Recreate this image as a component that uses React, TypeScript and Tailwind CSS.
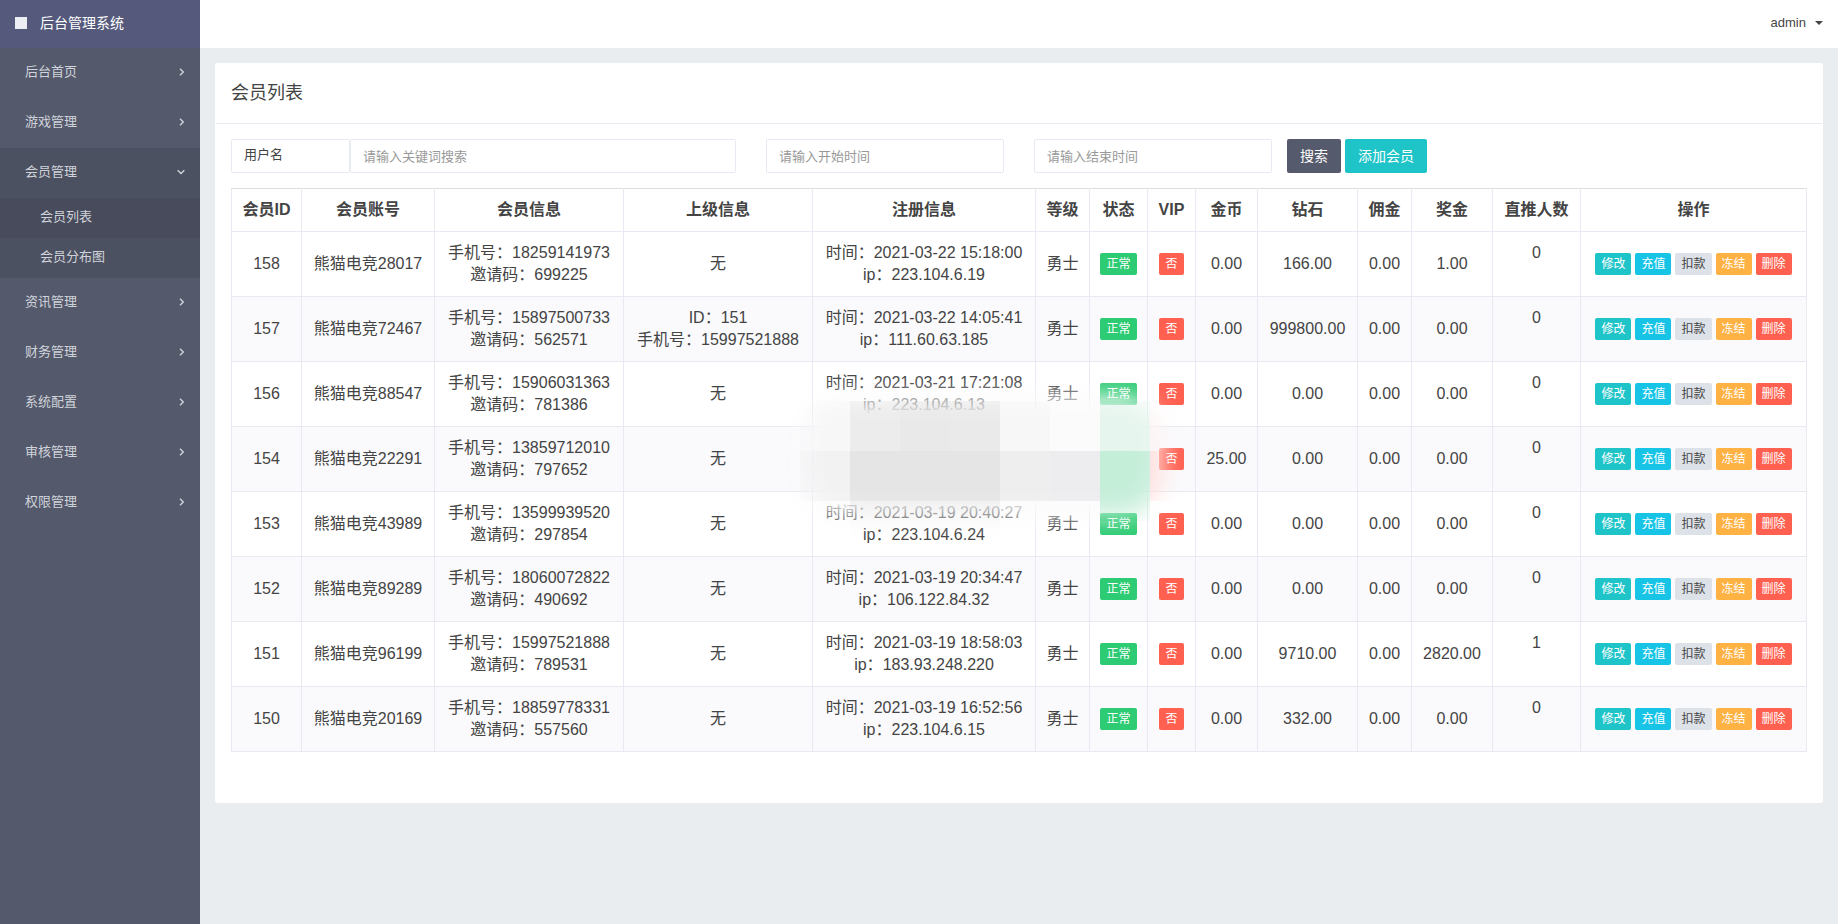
import React from "react";

const menuTop = ["后台首页", "游戏管理"];
const menuBottom = ["资讯管理", "财务管理", "系统配置", "审核管理", "权限管理"];

const columns = [
  { title: "会员ID", width: "w-[70px]" },
  { title: "会员账号", width: "w-[133px]" },
  { title: "会员信息", width: "w-[189px]" },
  { title: "上级信息", width: "w-[189px]" },
  { title: "注册信息", width: "w-[223px]" },
  { title: "等级", width: "w-[54px]" },
  { title: "状态", width: "w-[58px]" },
  { title: "VIP", width: "w-[48px]" },
  { title: "金币", width: "w-[62px]" },
  { title: "钻石", width: "w-[100px]" },
  { title: "佣金", width: "w-[54px]" },
  { title: "奖金", width: "w-[81px]" },
  { title: "直推人数", width: "w-[88px]" },
  { title: "操作", width: "w-[226px]" },
];

const members = [
  { id: 158, name: "熊猫电竞28017", phone: "18259141973", code: "699225", time: "2021-03-22 15:18:00", ip: "223.104.6.19", gold: "0.00", diamond: "166.00", bonus: "1.00", invited: 0 },
  { id: 157, name: "熊猫电竞72467", phone: "15897500733", code: "562571", parent: { id: 151, phone: "15997521888" }, time: "2021-03-22 14:05:41", ip: "111.60.63.185", gold: "0.00", diamond: "999800.00", bonus: "0.00", invited: 0 },
  { id: 156, name: "熊猫电竞88547", phone: "15906031363", code: "781386", time: "2021-03-21 17:21:08", ip: "223.104.6.13", gold: "0.00", diamond: "0.00", bonus: "0.00", invited: 0 },
  { id: 154, name: "熊猫电竞22291", phone: "13859712010", code: "797652", masked: true, gold: "25.00", diamond: "0.00", bonus: "0.00", invited: 0 },
  { id: 153, name: "熊猫电竞43989", phone: "13599939520", code: "297854", time: "2021-03-19 20:40:27", ip: "223.104.6.24", gold: "0.00", diamond: "0.00", bonus: "0.00", invited: 0 },
  { id: 152, name: "熊猫电竞89289", phone: "18060072822", code: "490692", time: "2021-03-19 20:34:47", ip: "106.122.84.32", gold: "0.00", diamond: "0.00", bonus: "0.00", invited: 0 },
  { id: 151, name: "熊猫电竞96199", phone: "15997521888", code: "789531", time: "2021-03-19 18:58:03", ip: "183.93.248.220", gold: "0.00", diamond: "9710.00", bonus: "2820.00", invited: 1 },
  { id: 150, name: "熊猫电竞20169", phone: "18859778331", code: "557560", time: "2021-03-19 16:52:56", ip: "223.104.6.15", gold: "0.00", diamond: "332.00", bonus: "0.00", invited: 0 },
];

const actions = [
  { label: "修改", color: "bg-[#1fc4c8] text-white" },
  { label: "充值", color: "bg-[#18c4e6] text-white" },
  { label: "扣款", color: "bg-[#dde1e8] text-[#444444]" },
  { label: "冻结", color: "bg-[#ffb244] text-white" },
  { label: "删除", color: "bg-[#ff6050] text-white" },
];

const Chevron = ({ open = false }) => (
  <svg className="h-2 w-2" viewBox="0 0 8 8" fill="none" stroke="currentColor" strokeWidth="1.4">
    <path d={open ? "M0.7 2.2 4 5.5 7.3 2.2" : "M3 0.7 6.3 4 3 7.3"} />
  </svg>
);

const MenuItem = ({ label, open = false }) => (
  <a href="#" className="flex h-[50px] items-center justify-between pr-[15px] pb-0.5 pl-[25px]">
    {label}
    <Chevron open={open} />
  </a>
);

const Sidebar = () => (
  <aside className="w-[200px] shrink-0 bg-[#545a6c] text-[13px] text-[#d0d3da]">
    <a href="#" className="flex h-12 items-center gap-[13px] bg-[#555a7c] pb-0.5 pl-[15px] text-sm text-white">
      <span className="h-3 w-3 bg-[#eceef4]" />
      后台管理系统
    </a>
    <nav>
      {menuTop.map((label) => <MenuItem key={label} label={label} />)}
      <div className="bg-[#4c5161]">
        <MenuItem label="会员管理" open />
        <a href="#" className="flex h-10 items-center bg-[#474b5b] pb-0.5 pl-10">会员列表</a>
        <a href="#" className="flex h-10 items-center pb-0.5 pl-10">会员分布图</a>
      </div>
      {menuBottom.map((label) => <MenuItem key={label} label={label} />)}
    </nav>
  </aside>
);

const inputClass = "h-[34px] rounded-[2px] border border-[#e7eaf3] bg-white px-3 text-[13px] text-[#444444] placeholder:text-[#999999] focus:outline-none";

const Filters = () => (
  <form className="flex items-center" onSubmit={(e) => e.preventDefault()}>
    <select aria-label="搜索字段" className={"w-[119px] shrink-0 appearance-none pb-0.5 " + inputClass}>
      <option>用户名</option>
    </select>
    <input aria-label="关键词" placeholder="请输入关键词搜索" className={"w-[386px] " + inputClass} />
    <input aria-label="开始时间" placeholder="请输入开始时间" className={"ml-[30px] w-[238px] " + inputClass} />
    <input aria-label="结束时间" placeholder="请输入结束时间" className={"ml-[30px] w-[238px] " + inputClass} />
    <button className="ml-[15px] h-[34px] rounded-[2px] bg-[#555a6c] px-[13px] text-sm text-white">搜索</button>
    <button type="button" className="ml-1 h-[34px] rounded-[2px] bg-[#1fc4c8] px-[13px] text-sm text-white">添加会员</button>
  </form>
);

const cell = "border border-[#e7eaf3] p-0 py-[10px]";

const Mask = () => (
  <svg className="pointer-events-none absolute top-[-66px] left-[-33px] h-[180px] w-[440px]" viewBox="0 0 440 180">
    <defs>
      <filter id="soft" x="-20%" y="-30%" width="140%" height="160%">
        <feGaussianBlur stdDeviation="12" />
      </filter>
      <mask id="fade">
        <rect x="22" y="26" width="360" height="118" rx="42" fill="#fff" filter="url(#soft)" />
      </mask>
    </defs>
    <g mask="url(#fade)">
      <rect width="440" height="180" fill="#fbfbfc" />
      <rect x="0" y="80" width="20" height="50" fill="#f8f8f9" />
      <rect x="20" y="30" width="50" height="50" fill="#f7f7f8" />
      <rect x="20" y="80" width="50" height="50" fill="#f2f2f3" />
      <rect x="70" y="30" width="50" height="50" fill="#ececed" />
      <rect x="120" y="30" width="50" height="50" fill="#e9e9e9" />
      <rect x="170" y="30" width="50" height="50" fill="#eaeaea" />
      <rect x="70" y="80" width="150" height="50" fill="#e5e5e6" />
      <rect x="70" y="130" width="150" height="50" fill="#f0f0f1" />
      <rect x="220" y="30" width="50" height="50" fill="#f7f7f8" />
      <rect x="220" y="80" width="50" height="50" fill="#eeeeef" />
      <rect x="270" y="80" width="50" height="50" fill="#ededf0" />
      <rect x="320" y="30" width="50" height="50" fill="#e6f5ee" />
      <rect x="320" y="80" width="50" height="70" fill="#c5eed9" />
      <rect x="370" y="30" width="70" height="50" fill="#fdf3f3" />
      <rect x="370" y="80" width="70" height="50" fill="#ffdfdd" />
    </g>
  </svg>
);

const MemberTable = () => (
  <table className="mt-[15px] w-full table-fixed border-collapse text-center text-base leading-[22px] whitespace-nowrap">
    <thead>
      <tr>
        {columns.map((c) => (
          <th key={c.title} className={"border border-t-[#dddddd] border-[#e7eaf3] p-0 py-[10px] font-bold " + c.width}>{c.title}</th>
        ))}
      </tr>
    </thead>
    <tbody>
      {members.map((m) => (
        <tr key={m.id} className="even:bg-[#fafafc]">
          <td className={cell}>{m.id}</td>
          <td className={cell}>{m.name}</td>
          <td className={cell}>手机号：{m.phone}<br />邀请码：{m.code}</td>
          <td className={cell}>{m.parent ? <>ID：{m.parent.id}<br />手机号：{m.parent.phone}</> : "无"}</td>
          <td className={cell}>
            {m.masked ? <div className="relative h-11"><Mask /></div> : <>时间：{m.time}<br />ip：{m.ip}</>}
          </td>
          <td className={cell}>{!m.masked && "勇士"}</td>
          <td className={cell}>
            <span className="inline-block h-[22px] rounded-[2px] bg-[#2dcb73] px-[6px] align-middle text-xs leading-[22px] text-white">正常</span>
          </td>
          <td className={cell}>
            <span className="inline-block h-[22px] rounded-[2px] bg-[#ff6050] px-[6px] align-middle text-xs leading-[22px] text-white">否</span>
          </td>
          <td className={cell}>{m.gold}</td>
          <td className={cell}>{m.diamond}</td>
          <td className={cell}>0.00</td>
          <td className={cell}>{m.bonus}</td>
          <td className={cell + " align-top"}>{m.invited}</td>
          <td className={cell}>
            <div className="flex justify-center gap-1">
              {actions.map((a) => (
                <button key={a.label} className={"h-[22px] rounded-[2px] px-[6px] text-xs leading-[22px] " + a.color}>{a.label}</button>
              ))}
            </div>
          </td>
        </tr>
      ))}
    </tbody>
  </table>
);

const App = () => (
  <div className="flex min-h-screen bg-[#e9edf0] font-['Liberation_Sans','Noto_Sans_CJK_SC',sans-serif] text-[#444444]">
    <Sidebar />
    <div className="min-w-0 flex-1">
      <header className="flex h-12 items-center justify-end bg-white pr-[15px] pb-0.5">
        <button className="flex items-center gap-[9px] text-[13px]">
          admin
          <svg className="h-1 w-2" viewBox="0 0 8 4" fill="currentColor"><path d="M0 0h8L4 4z" /></svg>
        </button>
      </header>
      <main className="p-[15px]">
        <section className="rounded-[2px] border border-white bg-white">
          <h1 className="flex h-[60px] items-center border-b border-[#e9ebf2] px-[15px] pb-0.5 text-lg">会员列表</h1>
          <div className="px-[15px] pt-[15px] pb-[50px]">
            <Filters />
            <MemberTable />
          </div>
        </section>
      </main>
    </div>
  </div>
);

export default App;
